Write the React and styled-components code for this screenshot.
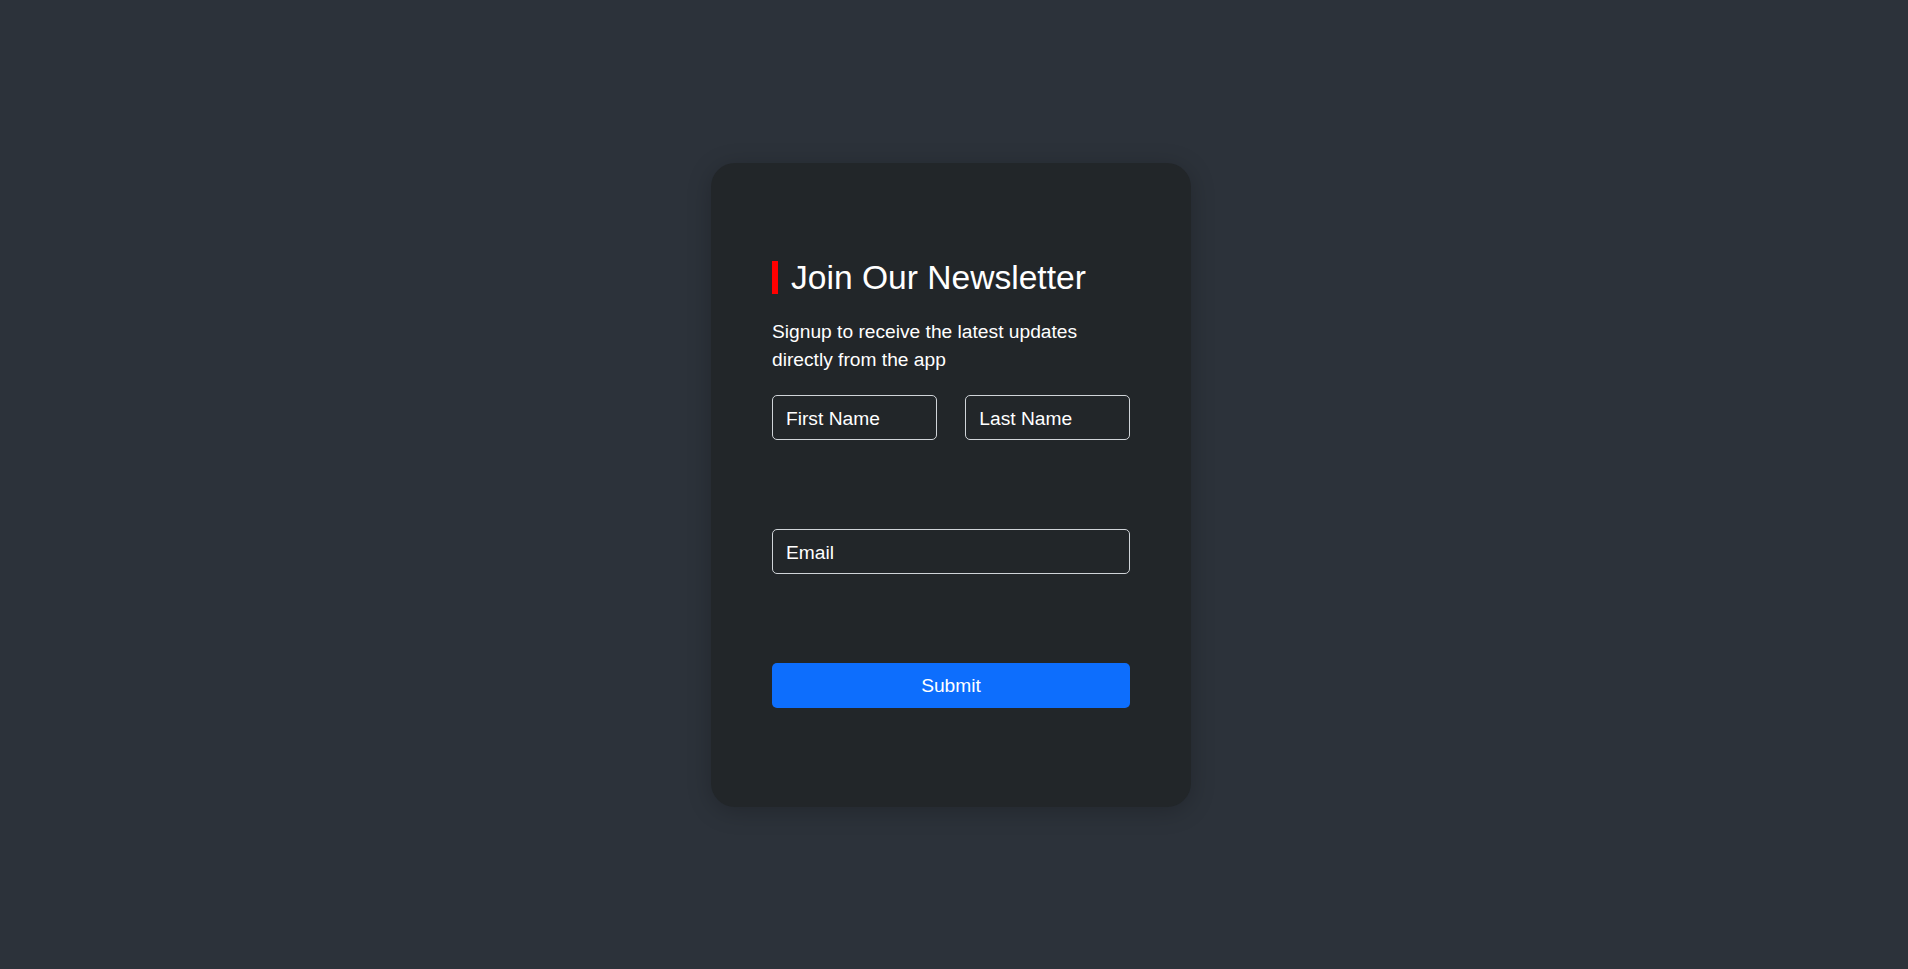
import React from "react";
import styled, { createGlobalStyle } from "styled-components";

const GlobalStyle = createGlobalStyle`
  html, body {
    margin: 0;
    padding: 0;
    background: #2c323a;
    font-family: "Liberation Sans", Arial, sans-serif;
  }
  * {
    box-sizing: border-box;
  }
`;

const Page = styled.main`
  min-height: 969px;
  display: flex;
  align-items: center;
  justify-content: center;
  padding-right: 6px;
`;

const Card = styled.form`
  width: 480px;
  height: 644px;
  padding: 98px 61px;
  background: #222629;
  border-radius: 24px;
  box-shadow: 0 4px 24px rgba(0, 0, 0, 0.22);
  display: flex;
  flex-direction: column;
  color: #ffffff;
`;

const Title = styled.h1`
  margin: 0;
  font-size: 33.6px;
  font-weight: 400;
  line-height: 1;
  height: 33px;
  border-left: 6px solid #ff0000;
  padding-left: 13px;
  white-space: nowrap;
`;

const Lead = styled.p`
  margin: 24px 0 20px;
  font-size: 19.2px;
  line-height: 28.8px;
`;

const Row = styled.div`
  display: flex;
  justify-content: space-between;
  margin-bottom: ${(p) => p.$space}px;
`;

const Field = styled.input`
  width: ${(p) => p.$width || "100%"};
  height: 45px;
  padding: 2px 13px 0;
  background: transparent;
  border: 1px solid #d0d4d8;
  border-radius: 5px;
  color: #ffffff;
  font-family: inherit;
  font-size: 19.2px;
  outline: none;
  &::placeholder {
    color: #ffffff;
    opacity: 1;
  }
`;

const SubmitButton = styled.button`
  width: 100%;
  height: 45px;
  border: none;
  border-radius: 5px;
  background: #0d6efd;
  color: #ffffff;
  font-family: inherit;
  font-size: 19.2px;
  cursor: pointer;
`;

export default function App() {
  return (
    <>
      <GlobalStyle />
      <Page>
        <Card onSubmit={(e) => e.preventDefault()}>
          <Title>Join Our Newsletter</Title>
          <Lead>Signup to receive the latest updates directly from the app</Lead>
          <Row $space={89}>
            <Field $width="46%" placeholder="First Name" />
            <Field $width="46%" placeholder="Last Name" />
          </Row>
          <Row $space={89}>
            <Field type="email" placeholder="Email" />
          </Row>
          <SubmitButton type="submit">Submit</SubmitButton>
        </Card>
      </Page>
    </>
  );
}
